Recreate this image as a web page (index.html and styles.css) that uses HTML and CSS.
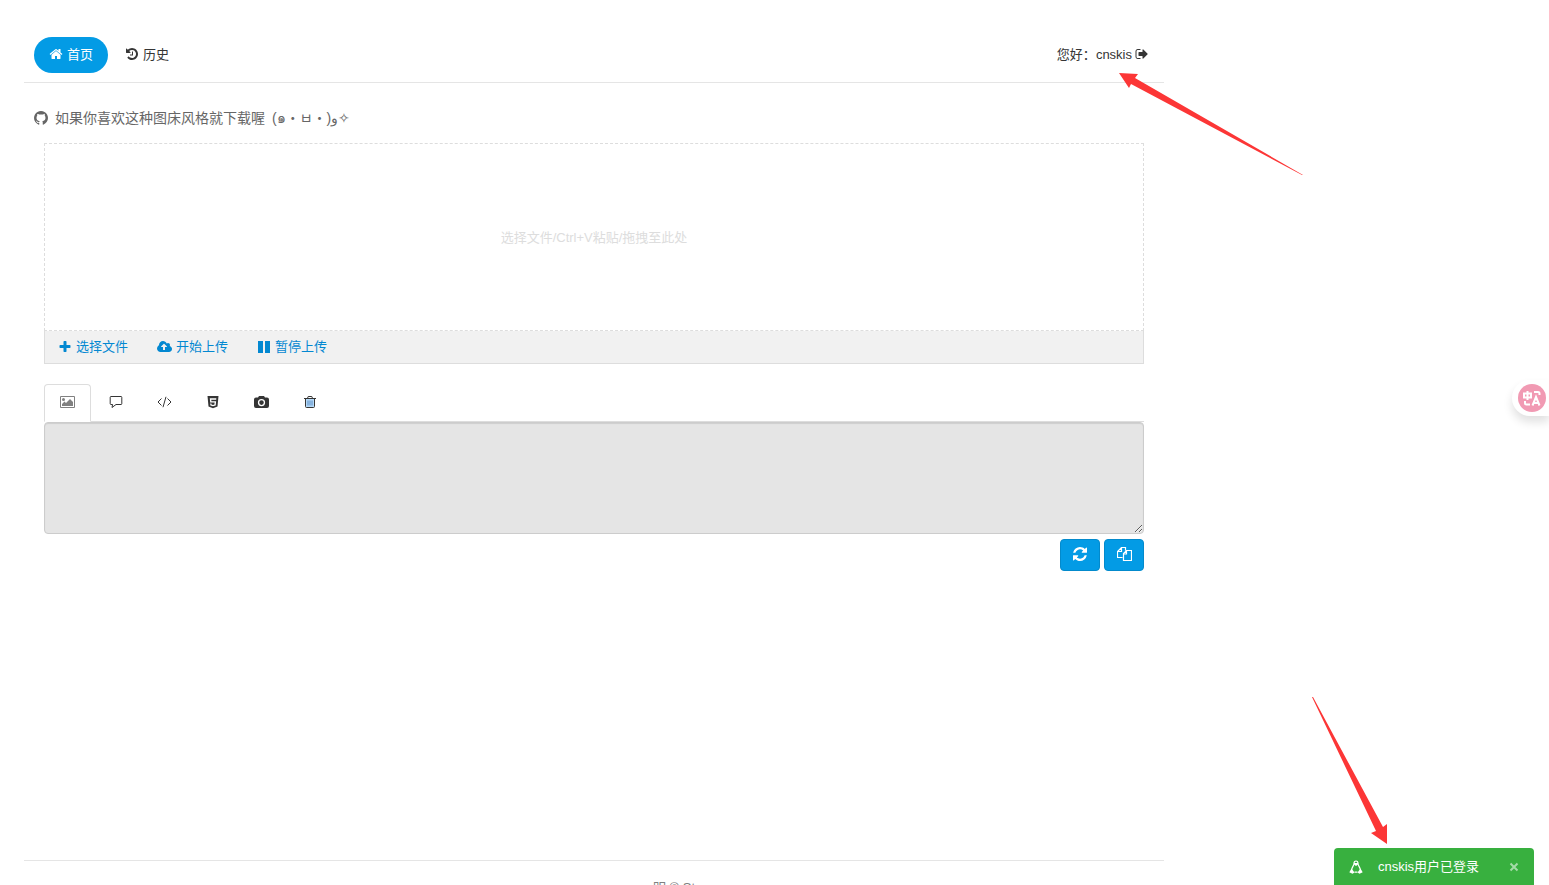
FILE: index.html
```html
<!DOCTYPE html>
<html lang="zh-CN">
<head>
<meta charset="utf-8">
<title>图床</title>
<link rel="stylesheet" href="styles.css">
</head>
<body>
<div class="page">
  <header class="header">
    <nav class="nav">
      <a class="nav-link nav-link-active" href="#"><svg class="icon" viewBox="0 0 1792 1792" aria-hidden="true"><path d="M1472 992v480q0 26-19 45t-45 19h-384v-384h-256v384h-384q-26 0-45-19t-19-45v-480q0-1 .5-3t.5-3l575-474 575 474q1 2 1 6zm223-69l-62 74q-8 9-21 11h-3q-13 0-21-7l-692-577-692 577q-12 8-24 7-13-2-21-11l-62-74q-8-10-7-23.500t11-21.500l719-599q32-26 76-26t76 26l244 204v-195q0-14 9-23t23-9h192q14 0 23 9t9 23v408l219 182q10 8 11 21.500t-7 23.500z"/></svg>首页</a>
      <a class="nav-link" href="#"><svg class="icon" viewBox="0 0 1792 1792" aria-hidden="true"><path d="M1664 896q0 156-61 298t-164 245-245 164-298 61q-172 0-327-72.500t-264-204.500q-7-10-6.500-22.500t8.500-20.500l137-138q10-9 25-9 16 2 23 12 73 95 179 147t225 52q104 0 198.500-40.500t163.500-109.500 109.500-163.500 40.500-198.500-40.500-198.500-109.500-163.500-163.500-109.500-198.500-40.500q-98 0-188 35.500t-160 101.500l137 138q31 30 14 69-17 40-59 40h-448q-26 0-45-19t-19-45v-448q0-42 40-59 39-17 69 14l130 129q107-101 244.500-156.500t284.500-55.500q156 0 298 61t245 164 164 245 61 298zm-640-288v448q0 14-9 23t-23 9h-320q-14 0-23-9t-9-23v-64q0-14 9-23t23-9h224v-352q0-14 9-23t23-9h64q14 0 23 9t9 23z"/></svg>历史</a>
    </nav>
    <div class="user">
      <span>您好：</span>
      <a class="user-link" href="#">cnskis<svg class="icon" viewBox="0 0 1792 1792" aria-hidden="true"><path d="M704 1440q0 4 1 20t.5 26.500-3 23.500-10 19.500-20.500 6.500h-320q-119 0-203.500-84.500t-84.500-203.500v-704q0-119 84.500-203.500t203.500-84.500h320q13 0 22.500 9.500t9.500 22.500q0 4 1 20t.5 26.500-3 23.500-10 19.500-20.500 6.500h-320q-66 0-113 47t-47 113v704q0 66 47 113t113 47h312l11.500 1 11.500 3 8 5.500 7 9 2 13.500zm928-544q0 26-19 45l-544 544q-19 19-45 19t-45-19-19-45v-288h-448q-26 0-45-19t-19-45v-384q0-26 19-45t45-19h448v-288q0-26 19-45t45-19 45 19l544 544q19 19 19 45z"/></svg></a>
    </div>
  </header>

  <main class="main">
    <a class="intro" href="#"><svg class="icon" viewBox="128 128 1536 1536" aria-hidden="true"><path d="M896 128q209 0 385.500 103t279.500 279.500 103 385.500q0 251-146.500 451.500t-378.500 277.500q-27 5-40-7t-13-30q0-3 .5-76.500t.5-134.500q0-97-52-142 57-6 102.500-18t94-39 81-66.500 53-105 20.500-150.500q0-119-79-206 37-91-8-204-28-9-81 11t-92 44l-38 24q-93-26-192-26t-192 26q-16-11-42.500-27t-83.500-38.500-85-13.500q-45 113-8 204-79 87-79 206 0 85 20.500 150t52.500 105 80.500 67 94 39 102.500 18q-39 36-49 103-21 10-45 15t-57 5-65.500-21.500-55.500-62.500q-19-32-48.500-52t-49.500-24l-20-3q-21 0-29 4.500t-5 11.500 9 14 13 12l7 5q22 10 43.500 38t31.500 51l10 23q13 38 44 61.500t67 30 69.500 7 55.500-3.500l23-4q0 38 .5 88.500t.5 54.500q0 18-13 30t-40 7q-232-77-378.500-277.500t-146.500-451.500q0-209 103-385.500t279.500-279.500 385.500-103z"/></svg><span>如果你喜欢这种图床风格就下载喔</span><bdi dir="ltr">(๑・ㅂ・)و✧</bdi></a>

    <section class="uploader">
      <div class="dropzone">选择文件/Ctrl+V粘贴/拖拽至此处</div>
      <div class="toolbar">
        <button class="tool" type="button"><svg class="icon" viewBox="0 0 1792 1792" aria-hidden="true"><path d="M1600 736v192q0 40-28 68t-68 28h-416v416q0 40-28 68t-68 28h-192q-40 0-68-28t-28-68v-416h-416q-40 0-68-28t-28-68v-192q0-40 28-68t68-28h416v-416q0-40 28-68t68-28h192q40 0 68 28t28 68v416h416q40 0 68 28t28 68z"/></svg>选择文件</button>
        <button class="tool" type="button"><svg class="icon icon-wide" viewBox="-64 0 1920 1792" aria-hidden="true"><path d="M1216 864q0-14-9-23l-352-352q-9-9-23-9t-23 9l-351 351q-10 12-10 24 0 14 9 23t23 9h224v352q0 13 9.500 22.500t22.500 9.500h192q13 0 22.500-9.500t9.500-22.500v-352h224q13 0 22.500-9.500t9.500-22.500zm640 288q0 159-112.500 271.500t-271.500 112.500h-1088q-185 0-316.500-131.500t-131.500-316.500q0-130 70-240t188-165q-2-30-2-43 0-212 150-362t362-150q156 0 285.500 87t188.500 231q71-62 166-62 106 0 181 75t75 181q0 76-41 138 130 31 213.500 135.500t83.500 238.500z"/></svg>开始上传</button>
        <button class="tool" type="button"><svg class="icon" viewBox="0 0 14 14" aria-hidden="true"><path d="M1 1h5v12H1zM8 1h5v12H8z"/></svg>暂停上传</button>
      </div>
    </section>

    <section class="results">
      <div class="tabs" role="tablist">
        <button class="tab tab-active" type="button" role="tab" aria-selected="true" aria-label="图片链接"><svg class="icon icon-wide" viewBox="0 0 15 14"><path fill-rule="evenodd" d="M1 1h13a1 1 0 0 1 1 1v10a1 1 0 0 1-1 1H1a1 1 0 0 1-1-1V2a1 1 0 0 1 1-1zm0 1v10h13V2zM2 11V9l2.500-2.500L6 8l4-4 3 3v4z"/><circle cx="3.500" cy="4.500" r="1.500"/></svg></button>
        <button class="tab" type="button" role="tab" aria-label="论坛代码"><svg class="icon" viewBox="0 0 14 14"><path class="line" d="M2 1.500h10q.8 0 .8.800v6.400q0 .8-.8.800H7L3 12.500l.6-3H2q-.8 0-.8-.8V2.300q0-.8.800-.8z"/></svg></button>
        <button class="tab" type="button" role="tab" aria-label="代码"><svg class="icon icon-wide" viewBox="0 0 15 14"><path class="line" d="M4.500 3.500L1 7l3.500 3.500M10.500 3.500L14 7l-3.500 3.500M9 1.800L6 12.200"/></svg></button>
        <button class="tab" type="button" role="tab" aria-label="HTML"><svg class="icon" viewBox="0 0 14 14"><path fill-rule="evenodd" d="M1.500 1h11l-1 10.500L7 13.200l-4.500-1.700zM3.800 3.300l.4 4.300h4.400l-.15 1.800L7 9.900l-1.500-.5-.1-1H4.200l.2 2L7 11.200l2.700-.8.400-4.200H5.400l-.1-1.400h4.900l.1-1.500z"/></svg></button>
        <button class="tab" type="button" role="tab" aria-label="缩略图"><svg class="icon icon-wide" viewBox="0 0 15 14"><path fill-rule="evenodd" d="M2 2.500h2l1-1.500h5l1 1.500h2q2 0 2 2V11q0 2-2 2H2q-2 0-2-2V4.500q0-2 2-2zM7.500 4a3.600 3.600 0 1 0 0 7.200 3.600 3.600 0 0 0 0-7.200zm0 1.300a2.300 2.300 0 1 1 0 4.600 2.300 2.300 0 0 1 0-4.600z"/></svg></button>
        <button class="tab" type="button" role="tab" aria-label="删除链接"><svg class="icon" viewBox="0 0 14 14"><path class="bin" d="M3 4h8v8.500H3z"/><path class="line" d="M1 3.500h12M4.500 3.300l.7-1.800h3.600l.7 1.800M2.500 3.500v8q0 1 1 1h7q1 0 1-1v-8"/><path class="bars" d="M5 5.500v5M7 5.500v5M9 5.500v5"/></svg></button>
      </div>
      <textarea class="links" readonly aria-label="图片链接"></textarea>
      <div class="actions">
        <button class="action" type="button" aria-label="刷新"><svg class="icon" viewBox="128 128 1536 1536"><path d="M1639 1056q0 5-1 7-64 268-268 434.500t-478 166.500q-146 0-282.500-55t-243.500-157l-129 129q-19 19-45 19t-45-19-19-45v-448q0-26 19-45t45-19h448q26 0 45 19t19 45-19 45l-137 137q71 66 161 102t187 36q134 0 250-65t186-179q11-17 53-117 8-23 30-23h192q13 0 22.500 9.500t9.500 22.500zm25-800v448q0 26-19 45t-45 19h-448q-26 0-45-19t-19-45 19-45l138-138q-148-137-349-137-134 0-250 65t-186 179q-11 17-53 117-8 23-30 23h-199q-13 0-22.500-9.500t-9.500-22.500v-7q65-268 270-434.500t480-166.500q146 0 284 55.500t245 156.500l130-129q19-19 45-19t45 19 19 45z"/></svg></button>
        <button class="action" type="button" aria-label="复制"><svg class="icon icon-wide" viewBox="0 0 15 14"><path class="line line-copy" d="M5.500 10.500h-5v-6l4-4h4v3M4.500.500v4h-4M9.500 3.500h5v10h-8v-7zM9.500 3.500v3.500h-3"/></svg></button>
      </div>
    </section>
  </main>

  <footer class="footer">明 © St</footer>
</div>

<svg class="arrow arrow-user" viewBox="0 0 184 102" aria-hidden="true"><path d="M0 0l19 1-3 4 168 97-1 0L12 11l-2 4z"/></svg>
<svg class="arrow arrow-toast" viewBox="0 0 76 148" aria-hidden="true"><path d="M0 0l1 0 70 130 4-3v20L59 136l5-2z"/></svg>

<button class="translate" type="button" aria-label="翻译"><svg class="translate-icon" viewBox="0 0 28 28"><circle cx="14" cy="14" r="14"/><path d="M6 9.500h7v4H6zM9.500 7v9M16 8h4q1.500 0 1.500 1.500V11M7 17v2q0 1.500 1.500 1.500H12M14.500 21.500L18 13l3.500 8.500M15.600 19h4.800"/></svg></button>

<div class="toast" role="status">
  <svg class="icon" viewBox="0 0 14 14" aria-hidden="true"><path class="line line-penguin" d="M5 3.500Q5 1 7 1t2 2.500c0 2.500 2.500 4 2.500 7M5 3.500c0 2.500-2.500 4-2.500 7M5.500 12.200h3"/><path d="M2.500 8.500l3 4-2 1.300L.3 12.300zM11.500 8.500l-3 4 2 1.300 3.200-1.500zM5 3h4v1.500L7 6 5 4.500z"/></svg>
  <span class="toast-text">cnskis用户已登录</span>
  <button class="toast-close" type="button" aria-label="关闭"><svg class="close-icon" viewBox="0 0 10 10"><path d="M1.500 1.500l7 7M8.500 1.500l-7 7"/></svg></button>
</div>
</body>
</html>
```
FILE: styles.css
```css
* { box-sizing: border-box; }

body {
  margin: 0;
  background: #fff;
  color: #353535;
  font: 13px/20px "Liberation Sans", "Noto Sans CJK SC", sans-serif;
}

button { font: inherit; color: inherit; border: 0; background: none; padding: 0; cursor: pointer; }
a { color: inherit; text-decoration: none; }

.page {
  display: flex;
  flex-direction: column;
  height: 100vh;
  max-width: 1164px;
  padding-left: 24px;
  overflow: hidden;
}

.icon { width: 14px; height: 14px; flex: none; fill: currentColor; }
.icon-wide { width: 15px; }
.line { fill: none; stroke: currentColor; stroke-width: 1; }
.line-copy { stroke-width: 1.2; }
.line-penguin { stroke-width: 1.2; }

.header {
  display: flex;
  justify-content: space-between;
  align-items: center;
  flex: none;
  padding: 37px 15px 9px 10px;
  border-bottom: 1px solid #e5e5e5;
}
.nav { display: flex; gap: 2px; }
.nav-link {
  display: flex;
  align-items: center;
  gap: 4px;
  height: 36px;
  padding: 0 15px;
  border-radius: 18px;
}
.nav-link-active { background: #039be5; color: #fff; }
.user, .user-link { display: flex; align-items: center; }
.user-link { gap: 3px; }
.nav-link .icon, .user-link .icon { margin-bottom: 2px; }

.main { flex: 1; min-height: 0; padding: 25px 20px 0; }
.intro {
  display: flex;
  align-items: center;
  gap: 7px;
  margin: 0 0 15px -10px;
  color: #666;
  font-size: 14px;
}

.dropzone {
  display: flex;
  align-items: center;
  justify-content: center;
  height: 188px;
  padding-top: 2px;
  border: 1px dashed #ddd;
  color: #ddd;
}
.toolbar {
  display: flex;
  height: 33px;
  background: #f1f1f1;
  border: 1px solid #ddd;
  border-top: 0;
}
.tool { display: flex; align-items: center; gap: 4px; padding: 0 14px 1px 15px; color: #0388d1; }
.tool:first-child { padding-left: 13px; }

.results { margin-top: 20px; }
.tabs { display: flex; gap: 2px; border-bottom: 1px solid #ddd; }
.tab {
  display: flex;
  align-items: center;
  height: 38px;
  margin-bottom: -1px;
  padding: 0 15px 2px;
  border: 1px solid transparent;
  border-radius: 4px 4px 0 0;
}
.tab-active { border-color: #ddd; border-bottom-color: #fff; background: #fff; color: #808080; }
.bin { fill: #b5d9f7; }
.bars { fill: none; stroke: #5b8dc5; stroke-width: 1; }

.links {
  display: block;
  width: 100%;
  height: 112px;
  padding: 5px 8px;
  border: 1px solid #ccc;
  border-radius: 4px;
  background: #e5e5e5;
  box-shadow: inset 0 1px 1px rgba(0, 0, 0, .1);
  font: inherit;
  resize: vertical;
}
.actions { display: flex; justify-content: flex-end; gap: 4px; margin-top: 5px; }
.action {
  display: flex;
  align-items: center;
  justify-content: center;
  width: 40px;
  height: 32px;
  padding-bottom: 2px;
  border: 1px solid #038acc;
  border-radius: 4px;
  background: #039be5;
  color: #fff;
}

.footer {
  flex: none;
  height: 25px;
  padding: 17px 0 0 160px;
  border-top: 1px solid #e5e5e5;
  color: #808080;
  text-align: center;
  white-space: nowrap;
}

.arrow { position: absolute; fill: #fc3636; pointer-events: none; }
.arrow-user { left: 1119px; top: 73px; width: 184px; height: 102px; }
.arrow-toast { left: 1312px; top: 697px; width: 76px; height: 148px; }

.translate {
  position: fixed;
  right: 0;
  top: 380px;
  display: flex;
  padding: 4px 3px 4px 6px;
  border-radius: 18px 0 0 18px;
  background: #fff;
  box-shadow: 0 6px 10px rgba(0, 0, 0, .12);
}
.translate-icon { width: 28px; height: 28px; fill: none; stroke: #fff; stroke-width: 2; }
.translate-icon circle { fill: #f19ab3; stroke: none; }

.toast {
  position: fixed;
  right: 15px;
  bottom: 0;
  display: flex;
  align-items: center;
  width: 200px;
  height: 37px;
  padding: 0 15px;
  border-radius: 4px 4px 0 0;
  background: #38b03f;
  color: #fff;
}
.toast-text { flex: 1; margin-left: 15px; }
.toast-close { display: flex; }
.close-icon { width: 10px; height: 10px; fill: none; stroke: #a5dba8; stroke-width: 2; }
```
